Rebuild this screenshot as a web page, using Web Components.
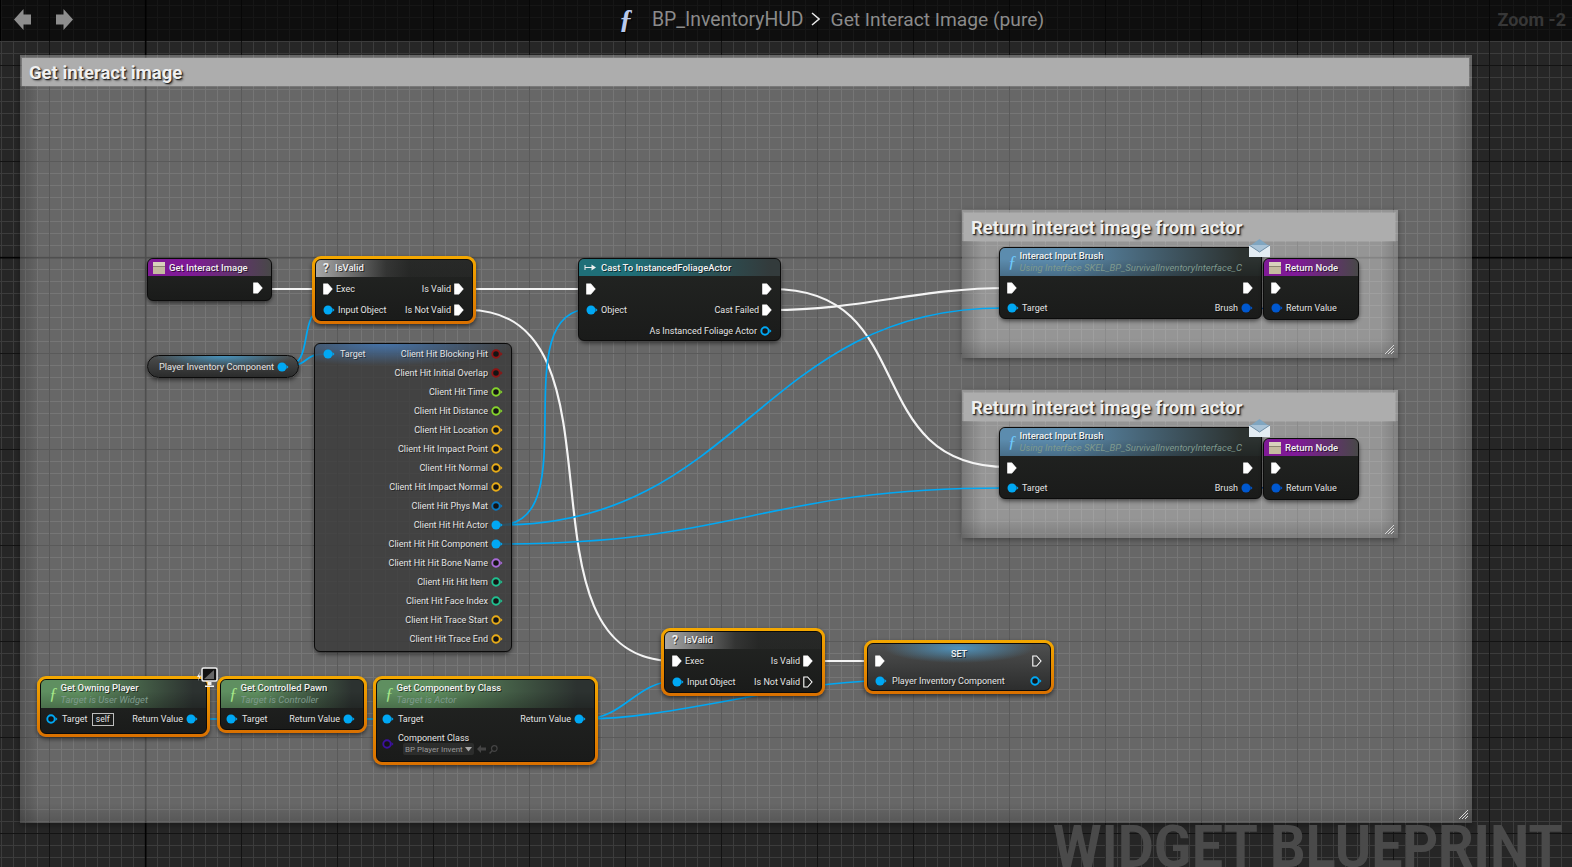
<!DOCTYPE html>
<html>
<head>
<meta charset="utf-8">
<title>BP_InventoryHUD</title>
<style>
html, body { margin: 0; height: 100%; overflow: hidden; background: #262626; }
body { font-family: Roboto, "Liberation Sans", sans-serif; color: #e6e6e6; }
</style>
</head>
<body>
<bp-graph>
  <bp-toolbar></bp-toolbar>

  <bp-comment x="20" y="55" w="1452" h="768">Get interact image</bp-comment>
  <bp-comment x="962" y="210" w="436" h="148">Return interact image from actor</bp-comment>
  <bp-comment x="962" y="390" w="436" h="148">Return interact image from actor</bp-comment>

  <bp-wires></bp-wires>

  <bp-node x="147" y="258" w="125" h="43" variant="purple" icon="table" title="Get Interact Image">
    <bp-pin slot="out" kind="exec" fill></bp-pin>
  </bp-node>

  <bp-node x="312" y="256" w="164" h="68" variant="gray" icon="question" title="IsValid" selected>
    <bp-pin slot="in" kind="exec" fill>Exec</bp-pin>
    <bp-pin slot="in" color="#00a8f4" fill>Input Object</bp-pin>
    <bp-pin slot="out" kind="exec" fill>Is Valid</bp-pin>
    <bp-pin slot="out" kind="exec" fill>Is Not Valid</bp-pin>
  </bp-node>

  <bp-node x="578" y="258" w="203" h="83" variant="teal" icon="cast" title="Cast To InstancedFoliageActor">
    <bp-pin slot="in" kind="exec" fill></bp-pin>
    <bp-pin slot="in" color="#00a8f4" fill>Object</bp-pin>
    <bp-pin slot="out" kind="exec" fill></bp-pin>
    <bp-pin slot="out" kind="exec" fill>Cast Failed</bp-pin>
    <bp-pin slot="out" color="#00a8f4">As Instanced Foliage Actor</bp-pin>
  </bp-node>

  <bp-var-node x="147" y="355" w="152" h="23" text="Player Inventory Component"></bp-var-node>

  <bp-node x="314" y="343" w="198" h="309" variant="break">
    <bp-pin slot="in" color="#00a8f4" fill>Target</bp-pin>
    <bp-pin slot="out" color="#8e1414">Client Hit Blocking Hit</bp-pin>
    <bp-pin slot="out" color="#8e1414">Client Hit Initial Overlap</bp-pin>
    <bp-pin slot="out" color="#86d42c">Client Hit Time</bp-pin>
    <bp-pin slot="out" color="#86d42c">Client Hit Distance</bp-pin>
    <bp-pin slot="out" color="#e8ac18">Client Hit Location</bp-pin>
    <bp-pin slot="out" color="#e8ac18">Client Hit Impact Point</bp-pin>
    <bp-pin slot="out" color="#e8ac18">Client Hit Normal</bp-pin>
    <bp-pin slot="out" color="#e8ac18">Client Hit Impact Normal</bp-pin>
    <bp-pin slot="out" color="#0a78c0">Client Hit Phys Mat</bp-pin>
    <bp-pin slot="out" color="#00a8f4" fill>Client Hit Hit Actor</bp-pin>
    <bp-pin slot="out" color="#00a8f4" fill>Client Hit Hit Component</bp-pin>
    <bp-pin slot="out" color="#a86ad8">Client Hit Hit Bone Name</bp-pin>
    <bp-pin slot="out" color="#20c090">Client Hit Hit Item</bp-pin>
    <bp-pin slot="out" color="#20c090">Client Hit Face Index</bp-pin>
    <bp-pin slot="out" color="#e8ac18">Client Hit Trace Start</bp-pin>
    <bp-pin slot="out" color="#e8ac18">Client Hit Trace End</bp-pin>
  </bp-node>

  <bp-node x="999" y="247" w="263" h="72" variant="blue" icon="func" title="Interact Input Brush" sub="Using Interface SKEL_BP_SurvivalInventoryInterface_C">
    <bp-pin slot="in" kind="exec" fill></bp-pin>
    <bp-pin slot="in" color="#00a8f4" fill>Target</bp-pin>
    <bp-pin slot="out" kind="exec" fill></bp-pin>
    <bp-pin slot="out" color="#0058d0" fill>Brush</bp-pin>
  </bp-node>
  <bp-node x="1263" y="258" w="96" h="62" variant="purple" icon="table" title="Return Node">
    <bp-pin slot="in" kind="exec" fill></bp-pin>
    <bp-pin slot="in" color="#0058d0" fill>Return Value</bp-pin>
  </bp-node>
  <bp-badge x="1249" y="239" icon="mail"></bp-badge>

  <bp-node x="999" y="427" w="263" h="72" variant="blue" icon="func" title="Interact Input Brush" sub="Using Interface SKEL_BP_SurvivalInventoryInterface_C">
    <bp-pin slot="in" kind="exec" fill></bp-pin>
    <bp-pin slot="in" color="#00a8f4" fill>Target</bp-pin>
    <bp-pin slot="out" kind="exec" fill></bp-pin>
    <bp-pin slot="out" color="#0058d0" fill>Brush</bp-pin>
  </bp-node>
  <bp-node x="1263" y="438" w="96" h="62" variant="purple" icon="table" title="Return Node">
    <bp-pin slot="in" kind="exec" fill></bp-pin>
    <bp-pin slot="in" color="#0058d0" fill>Return Value</bp-pin>
  </bp-node>
  <bp-badge x="1249" y="419" icon="mail"></bp-badge>

  <bp-node x="661" y="628" w="164" h="68" variant="gray" icon="question" title="IsValid" selected>
    <bp-pin slot="in" kind="exec" fill>Exec</bp-pin>
    <bp-pin slot="in" color="#00a8f4" fill>Input Object</bp-pin>
    <bp-pin slot="out" kind="exec" fill>Is Valid</bp-pin>
    <bp-pin slot="out" kind="exec">Is Not Valid</bp-pin>
  </bp-node>

  <bp-node x="864" y="640" w="190" h="54" variant="set" title="SET" selected>
    <bp-pin slot="in" kind="exec" fill></bp-pin>
    <bp-pin slot="in" color="#00a8f4" fill>Player Inventory Component</bp-pin>
    <bp-pin slot="out" kind="exec"></bp-pin>
    <bp-pin slot="out" color="#00a8f4"></bp-pin>
  </bp-node>

  <bp-node x="37" y="676" w="173" h="61" variant="green" icon="func" title="Get Owning Player" sub="Target is User Widget" selected>
    <bp-pin slot="in" color="#00a8f4">Target <bp-self>self</bp-self></bp-pin>
    <bp-pin slot="out" color="#00a8f4" fill>Return Value</bp-pin>
  </bp-node>
  <bp-badge x="197" y="667" icon="monitor"></bp-badge>

  <bp-node x="217" y="676" w="150" h="57" variant="green" icon="func" title="Get Controlled Pawn" sub="Target is Controller" selected>
    <bp-pin slot="in" color="#00a8f4" fill>Target</bp-pin>
    <bp-pin slot="out" color="#00a8f4" fill>Return Value</bp-pin>
  </bp-node>

  <bp-node x="373" y="676" w="225" h="89" variant="green" icon="func" title="Get Component by Class" sub="Target is Actor" selected>
    <bp-pin slot="in" color="#00a8f4" fill>Target</bp-pin>
    <bp-pin slot="in" color="#3c10a0" tall>Component Class<bp-picker>BP Player Invent</bp-picker></bp-pin>
    <bp-pin slot="out" color="#00a8f4" fill>Return Value</bp-pin>
  </bp-node>

  <bp-watermark>WIDGET BLUEPRINT</bp-watermark>
</bp-graph>

<script>
// small helper, all canvas items take x y w h attributes
function placeOnCanvas(el) {
    el.style.left = el.getAttribute("x") + "px";
    el.style.top = el.getAttribute("y") + "px";
    if (el.hasAttribute("w")) el.style.width = el.getAttribute("w") + "px";
    if (el.hasAttribute("h")) el.style.height = el.getAttribute("h") + "px";
}

class BpGraph extends HTMLElement {
    constructor() {
        super();
        this.shadowDOM = this.attachShadow({mode: "open"});
    }
    connectedCallback() {
        this.shadowDOM.innerHTML = `
        <style>
        :host {
            display: block;
            position: relative;
            width: 1572px;
            height: 867px;
            overflow: hidden;
            background-color: #262626;
            background-image:
                linear-gradient(90deg, #000 1px, transparent 1px),
                linear-gradient(#000 1px, transparent 1px),
                linear-gradient(90deg, #131313 1px, transparent 1px),
                linear-gradient(#131313 1px, transparent 1px),
                linear-gradient(90deg, #3c3c3c 1px, transparent 1px),
                linear-gradient(#3c3c3c 1px, transparent 1px);
            background-size: 3000px 3000px, 3000px 3000px, 96px 96px, 96px 96px, 12px 12px, 12px 12px;
            background-position: 145px 0, 0 257px, 49px 0, 0 65px, 1px 0, 0 5px;
        }
        </style>
        <slot></slot>`;
    }
}

class BpToolbar extends HTMLElement {
    constructor() {
        super();
        this.shadowDOM = this.attachShadow({mode: "open"});
    }
    connectedCallback() {
        this.shadowDOM.innerHTML = `
        <style>
        :host {
            display: flex;
            align-items: center;
            height: 41px;
            padding-bottom: 3px;
            background: rgba(0,0,0,.62);
            border-left: 1px solid #000;
            box-sizing: border-box;
            font-size: 19.400px;
            color: #8b8b8b;
            position: relative;
            z-index: 5;
        }
        svg { display: block; }
        .back { margin-left: 13px; }
        .forward { margin-left: 25px; }
        .func {
            margin-left: 546px;
            width: 24px;
            font: italic bold 28px "Liberation Serif", serif;
            color: #b9c9ec;
            text-shadow: 1px 1px 1px #000;
        }
        .parent { margin-left: 9px; }
        .sep { margin: 0 11px 0 7px; }
        .title { font-size: 19.200px; }
        .zoom {
            margin-left: auto;
            margin-right: 6px;
            font-size: 18px;
            font-weight: 700;
            color: #373737;
        }
        </style>
        <svg class="back" width="17" height="23" viewBox="0 0 17 23"><path d="M0 11.5 9.500 1V6.500H17V16.500H9.500V22Z" fill="#8d8d8d"/></svg>
        <svg class="forward" width="17" height="23" viewBox="0 0 17 23"><path d="M17 11.500 7.500 1V6.500H0V16.500H7.500V22Z" fill="#8d8d8d"/></svg>
        <span class="func">ƒ</span>
        <span class="parent">BP_InventoryHUD</span>
        <svg class="sep" width="9" height="14" viewBox="0 0 9 14"><path d="M1 1 8 7 1 13" fill="none" stroke="#e8e8e8" stroke-width="1.500"/></svg>
        <span class="title">Get Interact Image (pure)</span>
        <span class="zoom">Zoom -2</span>`;
    }
}

class BpComment extends HTMLElement {
    constructor() {
        super();
        this.shadowDOM = this.attachShadow({mode: "open"});
    }
    connectedCallback() {
        placeOnCanvas(this);
        this.shadowDOM.innerHTML = `
        <style>
        :host {
            display: flex;
            flex-direction: column;
            position: absolute;
            box-sizing: border-box;
            padding: 3px 3px 0 2px;
            background: rgba(255,255,255,.3);
            box-shadow: 0 2px 6px rgba(0,0,0,.35);
        }
        .title {
            flex: none;
            height: 28px;
            line-height: 31px;
            padding-left: 7px;
            background: #adadad;
            box-shadow: 0 0 0 1px rgba(255,255,255,.12);
            font-size: 18.500px;
            font-weight: 700;
            color: #f0f0f0;
            text-shadow: 1px 1px 1px #1c1c1c, 2px 2px 2px rgba(0,0,0,.35);
            white-space: nowrap;
        }
        .shade {
            flex: 1;
            background:
                linear-gradient(90deg, rgba(0,0,0,.2), transparent 20px),
                linear-gradient(0deg, rgba(0,0,0,.16), transparent 20px),
                linear-gradient(270deg, rgba(0,0,0,.14), transparent 18px);
            margin: 0 -3px 0 -2px;
        }
        svg { position: absolute; right: 3px; bottom: 3px; }
        </style>
        <div class="title"><slot></slot></div>
        <div class="shade"></div>
        <svg width="11" height="11" viewBox="0 0 11 11"><path d="M1 10 10 1M4 10 10 4M7 10 10 7" stroke="#d8d8d8" stroke-width="1" fill="none"/></svg>`;
    }
}

class BpWires extends HTMLElement {
    constructor() {
        super();
        this.shadowDOM = this.attachShadow({mode: "open"});
    }
    // x1 y1 x2 y2 tangent colour width
    get wires() {
        const white = "#f4f4f4", blue = "#00a8f4", dark = "#0a4aa0";
        return [
            [272, 289, 322, 289, 10, white, 2.2],
            [466, 289, 590, 289, 10, white, 2.2],
            [468, 310, 674, 661, 170, white, 2.2],
            [772, 289, 1008, 467, 150, white, 2.2],
            [772, 310, 1008, 288, 90, white, 2.2],
            [812, 661, 880, 661, 10, white, 2.2],
            [286, 366, 326, 309, 30, blue, 1.7],
            [286, 366, 326, 354, 25, blue, 1.7],
            [500, 525, 590, 309, 88, blue, 1.7],
            [500, 525, 1002, 308, 240, blue, 1.7],
            [500, 544, 1002, 488, 240, blue, 1.7],
            [196, 719, 232, 719, 5, blue, 1.7],
            [352, 719, 412, 719, 5, blue, 1.7],
            [584, 719, 676, 681, 40, blue, 1.7],
            [584, 719, 880, 681, 90, blue, 1.7],
            [1250, 308, 1278, 309, 8, dark, 1.5],
            [1250, 487, 1278, 489, 8, dark, 1.5]
        ];
    }
    connectedCallback() {
        const paths = this.wires.map(([x1, y1, x2, y2, t, color, width]) =>
            `<path d="M${x1} ${y1}C${x1 + t} ${y1} ${x2 - t} ${y2} ${x2} ${y2}" stroke="${color}" stroke-width="${width}" fill="none"/>`
        ).join("");
        this.shadowDOM.innerHTML = `
        <style>
        :host { position: absolute; left: 0; top: 0; width: 1572px; height: 867px; pointer-events: none; }
        svg { display: block; }
        </style>
        <svg width="1572" height="867">${paths}</svg>`;
    }
}

class BpNode extends HTMLElement {
    constructor() {
        super();
        this.shadowDOM = this.attachShadow({mode: "open"});
    }
    get iconMarkup() {
        switch (this.getAttribute("icon")) {
            case "table":
                return `<svg width="12" height="12" viewBox="0 0 12 12"><rect width="12" height="12" fill="#d8d2bc"/><rect y="4" width="12" height="1" fill="#8b8570"/><rect y="5" width="12" height="7" fill="#c4bba0"/></svg>`;
            case "question":
                return `<span class="q">?</span>`;
            case "cast":
                return `<svg width="13" height="9" viewBox="0 0 13 9"><path d="M1 2V7M1 4.500H11" stroke="#eee" fill="none"/><path d="M7.500 1.500 12 4.500 7.500 7.500Z" fill="#eee"/></svg>`;
            case "func":
                return `<span class="f">ƒ</span>`;
        }
        return "";
    }
    connectedCallback() {
        placeOnCanvas(this);
        const title = this.getAttribute("title") || "";
        this.removeAttribute("title");
        const sub = this.getAttribute("sub");
        const head = title ? `
            <div class="head ${sub ? "two" : ""}">
                ${this.iconMarkup}
                <div class="titles"><div class="name">${title}</div>${sub ? `<div class="sub">${sub}</div>` : ""}</div>
            </div>` : "";
        this.shadowDOM.innerHTML = `
        <style>
        :host {
            display: block;
            position: absolute;
            box-sizing: border-box;
            --row: 21px;
            --head: #555;
            --fcolor: #a6e88a;
            border-radius: 8px;
            box-shadow: 0 2px 4px rgba(0,0,0,.55);
        }
        :host([selected]) {
            padding: 3px;
            background: linear-gradient(#f4a800, #d97000);
            border-radius: 9px;
        }
        :host([variant=purple]) { --head: #7f1a96; --row: 20px; }
        :host([variant=gray]) { --head: #a8a8a8; }
        :host([variant=teal]) { --head: #1f6f78; }
        :host([variant=blue]) { --head: #5c8cae; --fcolor: #6ecbff; --row: 20px; }
        :host([variant=green]) { --head: #5f8f60; --row: 20px; --pin-left: 5px; --pin-gap: 4px; }
        :host([variant=break]) { --row: 19px; --pin-left: 8px; --pin-gap: 5px; }
        :host([variant=set]) { --row: 20px; --pin-gap: 5px; }
        .box {
            display: flex;
            flex-direction: column;
            height: 100%;
            box-sizing: border-box;
            border: 1px solid #0b0b0b;
            border-radius: 6px;
            overflow: hidden;
            background: linear-gradient(#232523, #1a1b1a);
        }
        :host([variant=break]) .box {
            background:
                radial-gradient(ellipse 130px 22px at 35% 0, rgba(70,130,200,.75), transparent),
                rgba(58,58,58,.8);
        }
        :host([variant=set]) .box {
            background:
                radial-gradient(ellipse 75px 15px at 50% 4px, rgba(80,170,225,.75), transparent),
                linear-gradient(#4e4f4f, #2c2d2d);
        }
        .head {
            flex: none;
            display: flex;
            align-items: center;
            gap: 4px;
            height: 17px;
            padding-left: 5px;
            background: linear-gradient(90deg, var(--head) 35%, #484848);
            font-size: 9.500px;
            color: #f2f2f2;
            text-shadow: 1px 1px 0 rgba(0,0,0,.6);
        }
        :host([variant=gray]) .head {
            box-sizing: border-box;
            padding-bottom: 2px;
            height: 17px;
            background: linear-gradient(90deg, var(--head), rgba(70,70,70,.5) 45%, rgba(50,50,50,.3) 60%);
        }
        :host([variant=teal]) .head { background: linear-gradient(90deg, var(--head) 25%, #333b3c 95%); }
        :host([variant=set]) .head {
            background: none;
            justify-content: center;
            align-items: flex-start;
            padding-left: 0;
            padding-top: 4px;
            font-size: 9px;
            height: 2px;
        }
        .head.two {
            height: 28px;
            padding-left: 8px;
            gap: 3px;
            background:
                linear-gradient(rgba(0,0,0,0) 40%, rgba(0,0,0,.22)),
                linear-gradient(90deg, var(--head) 25%, #2c3230 92%);
        }
        .titles { min-width: 0; }
        .name { line-height: 12px; font-weight: 500; }
        .sub { font-style: italic; line-height: 12px; color: #7f9a8e; text-shadow: none; white-space: nowrap; font-size: 9.500px; }
        .q { font-weight: 700; font-size: 12px; padding: 0 2px; color: #eee; }
        .f { font: italic 17px "Liberation Serif", serif; color: var(--fcolor); text-shadow: none; }
        .body {
            flex: 1;
            display: flex;
            justify-content: space-between;
            padding: 2px 0 0;
        }
        :host([selected]) .body { padding-top: 1px; }
        :host([variant=break]) .body { padding-top: 0; }
        :host([variant=set]) .body { padding-top: 1px; }
        .col { display: flex; flex-direction: column; }
        .col.out { align-items: flex-end; }
        </style>
        <div class="box">
            ${head}
            <div class="body">
                <div class="col"><slot name="in"></slot></div>
                <div class="col out"><slot name="out"></slot></div>
            </div>
        </div>`;
    }
}

class BpPin extends HTMLElement {
    constructor() {
        super();
        this.shadowDOM = this.attachShadow({mode: "open"});
    }
    connectedCallback() {
        const fill = this.hasAttribute("fill");
        const color = this.getAttribute("color") || "#fff";
        const icon = this.getAttribute("kind") === "exec"
            ? `<svg width="10" height="12" viewBox="0 0 10 12"><path d="M.8 1H4.600L9 6 4.600 11H.8Z" fill="${fill ? "#fff" : "none"}" stroke="#fff" stroke-width="1.100"/></svg>`
            : `<svg width="12" height="10" viewBox="0 0 12 10"><path d="M9.500 3 11.500 5 9.500 7Z" fill="${color}"/><circle cx="5" cy="5" r="${fill ? 4.500 : 3.700}" fill="${fill ? color : "#141414"}" stroke="${fill ? "none" : color}" stroke-width="1.900"/></svg>`;
        this.shadowDOM.innerHTML = `
        <style>
        :host {
            display: flex;
            align-items: center;
            height: var(--row);
            gap: var(--pin-gap, 3px);
            padding: 0 7px 0 var(--pin-left, 7px);
            font-size: 9px;
            color: #e4e4e4;
            white-space: nowrap;
            text-shadow: 1px 1px 0 rgba(0,0,0,.45);
        }
        :host([slot=out]) { flex-direction: row-reverse; gap: 3px; padding-right: 8px; padding-left: 7px; }
        :host([tall]) { height: 30px; }
        svg { display: block; flex: none; }
        </style>
        ${icon}
        <span class="label"><slot></slot></span>`;
    }
}

class BpSelf extends HTMLElement {
    constructor() {
        super();
        this.shadowDOM = this.attachShadow({mode: "open"});
    }
    connectedCallback() {
        this.shadowDOM.innerHTML = `
        <style>
        :host {
            display: inline-block;
            margin-left: 2px;
            padding: 0 3px;
            border: 1px solid #bdbdbd;
            line-height: 11px;
            font-size: 8.500px;
        }
        </style>
        <slot></slot>`;
    }
}

class BpPicker extends HTMLElement {
    constructor() {
        super();
        this.shadowDOM = this.attachShadow({mode: "open"});
    }
    connectedCallback() {
        this.shadowDOM.innerHTML = `
        <style>
        :host { display: flex; align-items: center; gap: 3px; margin: 0 0 0 5px; }
        .pick {
            display: flex;
            align-items: center;
            gap: 2px;
            height: 12px;
            padding: 0 2px;
            background: #2c2d2c;
            border-radius: 2px;
            font-size: 8px;
            color: #9a9a9a;
            text-shadow: none;
        }
        svg { display: block; }
        </style>
        <span class="pick"><slot></slot><svg width="7" height="5" viewBox="0 0 7 5"><path d="M0 0H7L3.500 4.500Z" fill="#a8a8a8"/></svg></span>
        <svg width="9" height="8" viewBox="0 0 9 8"><path d="M0 4 4 0V2.500H9V5.500H4V8Z" fill="#444"/></svg>
        <svg width="9" height="9" viewBox="0 0 9 9"><circle cx="5.300" cy="3.500" r="2.800" fill="none" stroke="#444" stroke-width="1.200"/><path d="M3.300 5.600 .6 8.400" stroke="#444" stroke-width="1.400"/></svg>`;
    }
}

class BpVarNode extends HTMLElement {
    constructor() {
        super();
        this.shadowDOM = this.attachShadow({mode: "open"});
    }
    connectedCallback() {
        placeOnCanvas(this);
        this.shadowDOM.innerHTML = `
        <style>
        :host {
            display: flex;
            align-items: center;
            justify-content: space-between;
            position: absolute;
            box-sizing: border-box;
            padding: 0 9px 0 11px;
            border: 1px solid #0b0b0b;
            border-radius: 12px;
            background:
                radial-gradient(ellipse 70px 12px at 50% 0, rgba(70,170,225,.75), transparent),
                linear-gradient(#4c4d4d, #2b2c2c);
            box-shadow: 0 2px 4px rgba(0,0,0,.55);
            font-size: 9.200px;
            color: #e4e4e4;
            white-space: nowrap;
        }
        svg { display: block; flex: none; }
        </style>
        <span>${this.getAttribute("text")}</span>
        <svg width="12" height="10" viewBox="0 0 12 10"><path d="M9.500 3 11.500 5 9.500 7Z" fill="#00a8f4"/><circle cx="5" cy="5" r="4.500" fill="#00a8f4"/></svg>`;
    }
}

class BpBadge extends HTMLElement {
    constructor() {
        super();
        this.shadowDOM = this.attachShadow({mode: "open"});
    }
    connectedCallback() {
        placeOnCanvas(this);
        const mail = `<svg width="21" height="18" viewBox="0 0 21 18">
            <path d="M1 7 10.500 0 20 7Z" fill="#7fa5c0"/>
            <rect x="0" y="6" width="21" height="12" fill="#e4edf3"/>
            <path d="M0 6 10.500 13 21 6" fill="#a8c2d6" stroke="#6e8ea6" stroke-width="1"/>
            </svg>`;
        const monitor = `<svg width="21" height="22" viewBox="0 0 21 22">
            <rect x="5" y="1" width="15" height="13" rx="1.500" fill="#111" stroke="#f0f0f0" stroke-width="1.500"/>
            <path d="M7 12 17 3V12Z" fill="#666"/>
            <path d="M10.500 15H14.500V18H10.500ZM8 18.500H17V20H8Z" fill="#f0f0f0"/>
            <path d="M3 5 0 10H2L1 14 4 8.500H2Z" fill="#f0f0f0"/>
            </svg>`;
        this.shadowDOM.innerHTML = `
        <style>
        :host { display: block; position: absolute; z-index: 3; }
        svg { display: block; }
        </style>
        ${this.getAttribute("icon") === "mail" ? mail : monitor}`;
    }
}

class BpWatermark extends HTMLElement {
    constructor() {
        super();
        this.shadowDOM = this.attachShadow({mode: "open"});
    }
    connectedCallback() {
        this.shadowDOM.innerHTML = `
        <style>
        :host {
            position: absolute;
            left: 1053px;
            top: 827px;
            font-size: 60px;
            line-height: 40px;
            font-weight: 700;
            color: #4a4a4a;
            white-space: nowrap;
            transform-origin: 0 0;
            transform: scaleX(.925);
        }
        </style>
        <slot></slot>`;
    }
}

customElements.define("bp-graph", BpGraph);
customElements.define("bp-toolbar", BpToolbar);
customElements.define("bp-comment", BpComment);
customElements.define("bp-wires", BpWires);
customElements.define("bp-node", BpNode);
customElements.define("bp-pin", BpPin);
customElements.define("bp-self", BpSelf);
customElements.define("bp-picker", BpPicker);
customElements.define("bp-var-node", BpVarNode);
customElements.define("bp-badge", BpBadge);
customElements.define("bp-watermark", BpWatermark);
</script>
</body>
</html>
